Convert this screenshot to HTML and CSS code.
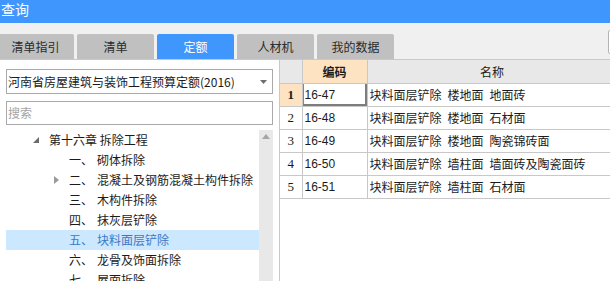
FILE: index.html
```html
<!DOCTYPE html>
<html lang="zh-CN">
<head>
  <meta charset="UTF-8">
  <title>查询</title>
  <link rel="stylesheet" href="styles.css">
</head>
<body>

  <div class="titlebar">查询</div>

  <div class="tabbar">
    <div class="tabs">
      <div class="tab">清单指引</div>
      <div class="tab">清单</div>
      <div class="tab active">定额</div>
      <div class="tab">人材机</div>
      <div class="tab">我的数据</div>
    </div>
    <div class="topsearch"></div>
  </div>

  <div class="main">
    <div class="left">
      <div class="select">
        <span class="select-text">河南省房屋建筑与装饰工程预算定额(2016)</span>
        <svg class="select-arrow" width="7" height="4" viewBox="0 0 7 4"><polygon points="0,0 7,0 3.5,4" fill="#6e6e6e"/></svg>
      </div>
      <div class="search">搜索</div>

      <div class="tree-wrap">
        <ul class="tree">
          <li class="node lv0">
            <span class="exp"><svg width="6" height="6" viewBox="0 0 6 6"><polygon points="6,0 6,6 0,6" fill="#6b6b6b"/></svg></span>第十六章 拆除工程
          </li>
          <li class="node lv1"><span class="exp"></span><span class="ord">一、</span>砌体拆除</li>
          <li class="node lv1">
            <span class="exp"><svg width="5" height="8" viewBox="0 0 5 8"><polygon points="0,0 5,4 0,8" fill="#9a9a9a"/></svg></span><span class="ord">二、</span>混凝土及钢筋混凝土构件拆除
          </li>
          <li class="node lv1"><span class="exp"></span><span class="ord">三、</span>木构件拆除</li>
          <li class="node lv1"><span class="exp"></span><span class="ord">四、</span>抹灰层铲除</li>
          <li class="node lv1 selected"><span class="exp"></span><span class="ord">五、</span>块料面层铲除</li>
          <li class="node lv1"><span class="exp"></span><span class="ord">六、</span>龙骨及饰面拆除</li>
          <li class="node lv1"><span class="exp"></span><span class="ord">七、</span>屋面拆除</li>
        </ul>
        <div class="vscroll">
          <svg class="vscroll-up" width="8" height="5" viewBox="0 0 8 5"><polygon points="4,0 8,5 0,5" fill="#a6a6a6"/></svg>
        </div>
      </div>
    </div>

    <div class="right">
      <table class="grid">
        <colgroup>
          <col class="c-num">
          <col class="c-code">
          <col class="c-name">
        </colgroup>
        <thead>
          <tr>
            <th class="num"></th>
            <th class="hl code-h">编码</th>
            <th>名称</th>
          </tr>
        </thead>
        <tbody>
          <tr>
            <td class="num hl cur-row">1</td>
            <td class="code cur">16-47</td>
            <td>块料面层铲除&ensp;楼地面&ensp;地面砖</td>
          </tr>
          <tr>
            <td class="num">2</td>
            <td class="code">16-48</td>
            <td>块料面层铲除&ensp;楼地面&ensp;石材面</td>
          </tr>
          <tr>
            <td class="num">3</td>
            <td class="code">16-49</td>
            <td>块料面层铲除&ensp;楼地面&ensp;陶瓷锦砖面</td>
          </tr>
          <tr>
            <td class="num">4</td>
            <td class="code">16-50</td>
            <td>块料面层铲除&ensp;墙柱面&ensp;墙面砖及陶瓷面砖</td>
          </tr>
          <tr>
            <td class="num">5</td>
            <td class="code">16-51</td>
            <td>块料面层铲除&ensp;墙柱面&ensp;石材面</td>
          </tr>
        </tbody>
      </table>
    </div>
  </div>

</body>
</html>
```

FILE: styles.css
```css
:root {
  --blue: #3f97fd;
  --bg: #f0f0f0;
  --tab-bg: #c0c0c0;
  --line: #c8c8c8;
  --peach: #fee3c3;
  --select-bg: #cce8ff;
  --text: #1b1b1b;
}

* {
  box-sizing: border-box;
}

body {
  margin: 0;
  width: 610px;
  height: 281px;
  overflow: hidden;
  background: var(--bg);
  color: var(--text);
  font-family: "Noto Sans CJK SC", "Noto Sans", sans-serif;
  font-size: 12px;
}

.titlebar {
  height: 23px;
  background: var(--blue);
  color: #fff;
  font-size: 14px;
  line-height: 18px;
  padding-left: 1px;
}

.tabbar {
  height: 37px;
  display: flex;
  align-items: flex-end;
  border-bottom: 1px solid var(--line);
}

.tabs {
  display: flex;
  gap: 3px;
  margin-left: -3px;
}

.tab {
  width: 77px;
  height: 25px;
  line-height: 25px;
  text-align: center;
  background: var(--tab-bg);
  border-radius: 2px 2px 0 0;
  color: #2a2a2a;
}

.tab.active {
  background: var(--blue);
  color: #fff;
}

.topsearch {
  margin-left: auto;
  margin-right: -38px;
  margin-bottom: 5px;
  width: 40px;
  height: 24px;
  background: #fff;
  border: 1px solid #b4b4b4;
  border-radius: 2px;
}

.main {
  display: flex;
  height: 221px;
}

.left {
  width: 279px;
  background: #fff;
  padding: 9px 6px 0 6px;
}

.select {
  height: 25px;
  border: 1px solid #a9a9a9;
  display: flex;
  align-items: center;
  padding: 0 5px 0 1px;
}

.select-text {
  flex: 1;
  white-space: nowrap;
}

.select-arrow {
  display: block;
}

.search {
  margin-top: 7px;
  height: 24px;
  border: 1px solid #a9a9a9;
  line-height: 22px;
  padding-left: 1px;
  color: #a4a4a4;
}

.tree-wrap {
  margin-top: 5px;
  display: flex;
  height: 160px;
}

.tree {
  list-style: none;
  margin: 0;
  padding: 0;
  flex: 1;
}

.node {
  height: 20px;
  line-height: 20px;
  display: flex;
  align-items: center;
  white-space: nowrap;
}

.exp {
  width: 16px;
  height: 20px;
  margin-right: 5px;
  display: flex;
  align-items: center;
  justify-content: center;
}

.ord {
  width: 28px;
  flex-shrink: 0;
}

.lv0 {
  padding-left: 22px;
}

.lv1 {
  padding-left: 42px;
}

.node.selected {
  background: var(--select-bg);
  color: #3b78c4;
}

.vscroll {
  width: 14px;
  background: #e8e8e8;
  display: flex;
  justify-content: center;
  padding-top: 4px;
}

.vscroll-up {
  display: block;
}

.right {
  flex: 1;
  background: #fff;
  border-left: 1px solid var(--line);
  overflow: hidden;
}

.grid {
  border-collapse: collapse;
  table-layout: fixed;
  width: 337px;
  font-size: 12px;
}

.c-num {
  width: 22px;
}

.c-code {
  width: 65px;
}

.c-name {
  width: 250px;
}

.grid th,
.grid td {
  height: 23px;
  border: 1px solid var(--line);
  padding: 0 2px;
  white-space: nowrap;
}

.grid tr > :first-child {
  border-left: none;
}

.grid thead tr > * {
  border-top: none;
}

.grid th {
  background: #e8e8e8;
  font-weight: normal;
  text-align: center;
}

.grid th.code-h {
  font-weight: bold;
}

.grid .hl {
  background: var(--peach);
}

.num {
  text-align: center;
  font-family: "Liberation Serif", serif;
  font-size: 13px;
}

.num.cur-row {
  font-weight: bold;
}

.code {
  font-family: "Liberation Sans", sans-serif;
}

.cur {
  box-shadow: inset -2px -2px 0 #7d7d7d, inset 1px 0 0 var(--blue);
}
```
